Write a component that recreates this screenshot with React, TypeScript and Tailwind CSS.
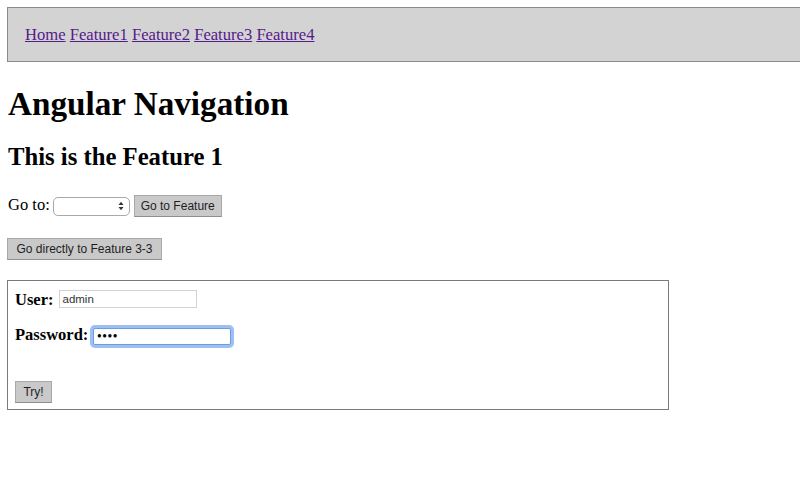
import React, { useState } from 'react';

const navLinks = ['Home', 'Feature1', 'Feature2', 'Feature3', 'Feature4'];

const btnClass =
  "h-[22px] border border-[#a8a8a8] border-b-[#8e8e8e] bg-[#c9c9c9] text-[12px] text-[#1e1e1e] font-['Liberation_Sans',Arial,sans-serif] flex items-center justify-center";

const App: React.FC = () => {
  const [user, setUser] = useState('admin');
  const [password, setPassword] = useState('test');

  return (
    <div className="min-h-screen bg-white text-black font-['Liberation_Serif','Times_New_Roman',serif] overflow-hidden">
      {/* Top navigation */}
      <nav className="ml-[7px] mt-[7px] h-[55px] border border-r-0 border-[#8a8a8a] bg-[#d3d3d3] pl-[17px] flex items-center text-[16.6px] leading-[19px]">
        <div>
          {navLinks.map((link, i) => (
            <React.Fragment key={link}>
              <a href="#" className="text-[#551a8b] underline">
                {link}
              </a>
              {i < navLinks.length - 1 && ' '}
            </React.Fragment>
          ))}
        </div>
      </nav>

      <h1 className="ml-[8px] mt-[23px] text-[33.2px] leading-[38px] font-bold">Angular Navigation</h1>
      <h2 className="ml-[8px] mt-[20px] text-[24.7px] leading-[28px] font-bold">This is the Feature 1</h2>

      {/* Feature selector */}
      <div className="ml-[8px] mt-[24px] flex items-center h-[22px] text-[16.5px] leading-[19px]">
        <span className="mb-[3px]">Go to:</span>
        <div className="ml-[3px] w-[77px] h-[19px] rounded-[5px] border border-[#a9a9a9] bg-white flex items-center justify-end pr-[5px]">
          <svg width="6" height="10" viewBox="0 0 6 10">
            <path d="M0.5 4 L3 0.8 L5.5 4 Z" fill="#333" />
            <path d="M0.5 6 L3 9.2 L5.5 6 Z" fill="#333" />
          </svg>
        </div>
        <button className={`${btnClass} ml-[4px] w-[88px]`}>Go to Feature</button>
      </div>

      <button className={`${btnClass} ml-[7px] mt-[21px] w-[155px]`}>Go directly to Feature 3-3</button>

      {/* Login box */}
      <div className="ml-[7px] mt-[20px] w-[662px] h-[130px] border border-[#7a7a7a] pl-[7px] pt-[8px]">
        <div className="flex items-center h-[20px]">
          <label className="font-bold text-[16.5px] leading-[19px]">User:</label>
          <input
            type="text"
            value={user}
            onChange={(e) => setUser(e.target.value)}
            className="ml-[6px] w-[138px] h-[18px] border border-[#d4d4d4] bg-white px-[2px] text-[11.5px] text-[#333] font-['Liberation_Sans',Arial,sans-serif] outline-none"
          />
        </div>
        <div className="flex items-center h-[24px] mt-[15px]">
          <label className="font-bold text-[16.5px] leading-[19px] mb-[4px]">Password:</label>
          <input
            type="password"
            value={password}
            onChange={(e) => setPassword(e.target.value)}
            className="ml-[5px] w-[138px] h-[17px] border border-[#6b9de0] rounded-[2px] bg-white px-[3px] text-[12px] tracking-[1px] font-bold outline-none shadow-[0_0_0_3px_rgba(124,170,240,0.75)]"
          />
        </div>
        <button className={`${btnClass} mt-[33px] w-[37px] h-[21px]`}>Try!</button>
      </div>
    </div>
  );
};

export default App;
